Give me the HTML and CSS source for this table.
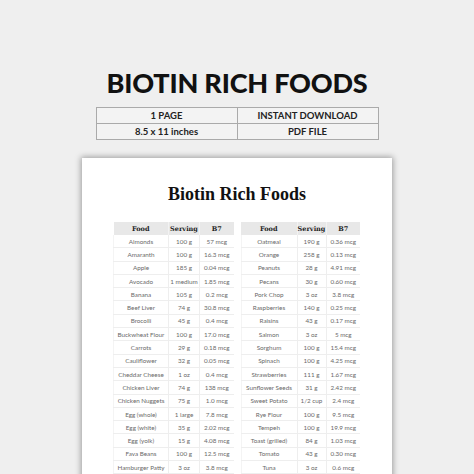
FILE: index.html
```html
<!DOCTYPE html>
<html>
<head>
<meta charset="utf-8">
<link rel="stylesheet" href="styles.css">
</head>
<body>
<div class="hero">
  <h1 class="hero-title">BIOTIN RICH FOODS</h1>
  <div class="info">
    <div class="info-cell">1 PAGE</div>
    <div class="info-cell">INSTANT DOWNLOAD</div>
    <div class="info-cell">8.5 x 11 inches</div>
    <div class="info-cell">PDF FILE</div>
  </div>
</div>
<div class="paper">
  <h2 class="paper-title">Biotin Rich Foods</h2>
  <div class="tables">
    <table class="foods left">
      <colgroup><col class="c-food-l"><col class="c-serv-l"><col class="c-b7"></colgroup>
      <thead><tr><th>Food</th><th>Serving</th><th>B7</th></tr></thead>
      <tbody>
        <tr><td>Almonds</td><td>100 g</td><td>57 mcg</td></tr>
        <tr><td>Amaranth</td><td>100 g</td><td>16.3 mcg</td></tr>
        <tr><td>Apple</td><td>185 g</td><td>0.04 mcg</td></tr>
        <tr><td>Avocado</td><td>1 medium</td><td>1.85 mcg</td></tr>
        <tr><td>Banana</td><td>105 g</td><td>0.2 mcg</td></tr>
        <tr><td>Beef Liver</td><td>74 g</td><td>30.8 mcg</td></tr>
        <tr><td>Brocolli</td><td>45 g</td><td>0.4 mcg</td></tr>
        <tr><td>Buckwheat Flour</td><td>100 g</td><td>17.0 mcg</td></tr>
        <tr><td>Carrots</td><td>29 g</td><td>0.18 mcg</td></tr>
        <tr><td>Cauliflower</td><td>32 g</td><td>0.05 mcg</td></tr>
        <tr><td>Cheddar Cheese</td><td>1 oz</td><td>0.4 mcg</td></tr>
        <tr><td>Chicken Liver</td><td>74 g</td><td>138 mcg</td></tr>
        <tr><td>Chicken Nuggets</td><td>75 g</td><td>1.0 mcg</td></tr>
        <tr><td>Egg (whole)</td><td>1 large</td><td>7.8 mcg</td></tr>
        <tr><td>Egg (white)</td><td>35 g</td><td>2.02 mcg</td></tr>
        <tr><td>Egg (yolk)</td><td>15 g</td><td>4.08 mcg</td></tr>
        <tr><td>Fava Beans</td><td>100 g</td><td>12.5 mcg</td></tr>
        <tr><td>Hamburger Patty</td><td>3 oz</td><td>3.8 mcg</td></tr>
      </tbody>
    </table>
    <table class="foods right">
      <colgroup><col class="c-food-r"><col class="c-serv-r"><col class="c-b7"></colgroup>
      <thead><tr><th>Food</th><th>Serving</th><th>B7</th></tr></thead>
      <tbody>
        <tr><td>Oatmeal</td><td>190 g</td><td>0.36 mcg</td></tr>
        <tr><td>Orange</td><td>258 g</td><td>0.13 mcg</td></tr>
        <tr><td>Peanuts</td><td>28 g</td><td>4.91 mcg</td></tr>
        <tr><td>Pecans</td><td>30 g</td><td>0.60 mcg</td></tr>
        <tr><td>Pork Chop</td><td>3 oz</td><td>3.8 mcg</td></tr>
        <tr><td>Raspberries</td><td>140 g</td><td>0.25 mcg</td></tr>
        <tr><td>Raisins</td><td>43 g</td><td>0.17 mcg</td></tr>
        <tr><td>Salmon</td><td>3 oz</td><td>5 mcg</td></tr>
        <tr><td>Sorghum</td><td>100 g</td><td>15.4 mcg</td></tr>
        <tr><td>Spinach</td><td>100 g</td><td>4.25 mcg</td></tr>
        <tr><td>Strawberries</td><td>111 g</td><td>1.67 mcg</td></tr>
        <tr><td>Sunflower Seeds</td><td>31 g</td><td>2.42 mcg</td></tr>
        <tr><td>Sweet Potato</td><td>1/2 cup</td><td>2.4 mcg</td></tr>
        <tr><td>Rye Flour</td><td>100 g</td><td>9.5 mcg</td></tr>
        <tr><td>Tempeh</td><td>100 g</td><td>19.9 mcg</td></tr>
        <tr><td>Toast (grilled)</td><td>84 g</td><td>1.03 mcg</td></tr>
        <tr><td>Tomato</td><td>43 g</td><td>0.30 mcg</td></tr>
        <tr><td>Tuna</td><td>3 oz</td><td>0.6 mcg</td></tr>
      </tbody>
    </table>
  </div>
</div>
</body>
</html>
```
FILE: styles.css
```css
html, body {
  margin: 0;
  padding: 0;
  background: #efefef;
  overflow: hidden;
}
body {
  width: 474px;
  height: 474px;
  font-family: "Lato", "Liberation Sans", sans-serif;
}
.hero {
  padding-top: 68px;
  display: flex;
  flex-direction: column;
  align-items: center;
}
.hero-title {
  margin: 0;
  font-family: "Lato", "Liberation Sans", sans-serif;
  font-weight: 900;
  font-size: 27px;
  line-height: 30px;
  letter-spacing: -0.2px;
  color: #111;
}
.info {
  margin-top: 9px;
  width: 283px;
  display: grid;
  grid-template-columns: 141px 140px;
  border: 1px solid #aaa;
  box-sizing: border-box;
  background: #f3f3f3;
}
.info-cell {
  height: 15px;
  line-height: 15px;
  font-size: 9.5px;
  font-weight: 700;
  color: #222;
  text-align: center;
}
.info-cell:nth-child(odd) { border-right: 1px solid #aaa; }
.info-cell:nth-child(-n+2) { border-bottom: 1px solid #aaa; }
.paper {
  margin: 18px 0 0 82px;
  width: 310px;
  height: 330px;
  background: #fff;
  box-shadow: 0 0 6px 1px rgba(0,0,0,0.35);
  padding-top: 25px;
  box-sizing: border-box;
}
.paper-title {
  margin: 0;
  text-align: center;
  font-family: "Liberation Serif", "DejaVu Serif", serif;
  font-weight: 700;
  font-size: 18px;
  line-height: 22px;
  color: #111;
}
.tables {
  margin-top: 17px;
  padding-left: 31px;
  display: flex;
  gap: 7px;
  align-items: flex-start;
}
.foods {
  border-collapse: collapse;
  table-layout: fixed;
}
.foods.left { width: 120px; }
.foods.right { width: 119px; }
.c-food-l { width: 55px; }
.c-serv-l { width: 31px; }
.c-food-r { width: 56px; }
.c-serv-r { width: 29px; }
.c-b7 { width: 34px; }
.foods th {
  background: #e8e8e8;
  height: 13px;
  padding: 0;
  font-family: "DejaVu Serif", "Liberation Serif", serif;
  font-weight: 700;
  font-size: 6.5px;
  color: #222;
  text-align: center;
  border-right: 1px solid #f2f2f2;
}
.foods th:last-child { border-right: none; }
.foods td {
  height: 12.3px;
  padding: 0;
  font-size: 6.3px;
  color: #6a6a6a;
  text-align: center;
  white-space: nowrap;
  overflow: hidden;
  border-bottom: 1px solid #eeeeee;
  border-right: 1px solid #eeeeee;
}
.foods td:last-child { border-right: none; }
.foods td:first-child { border-left: 1px solid #f4f4f4; }
```
